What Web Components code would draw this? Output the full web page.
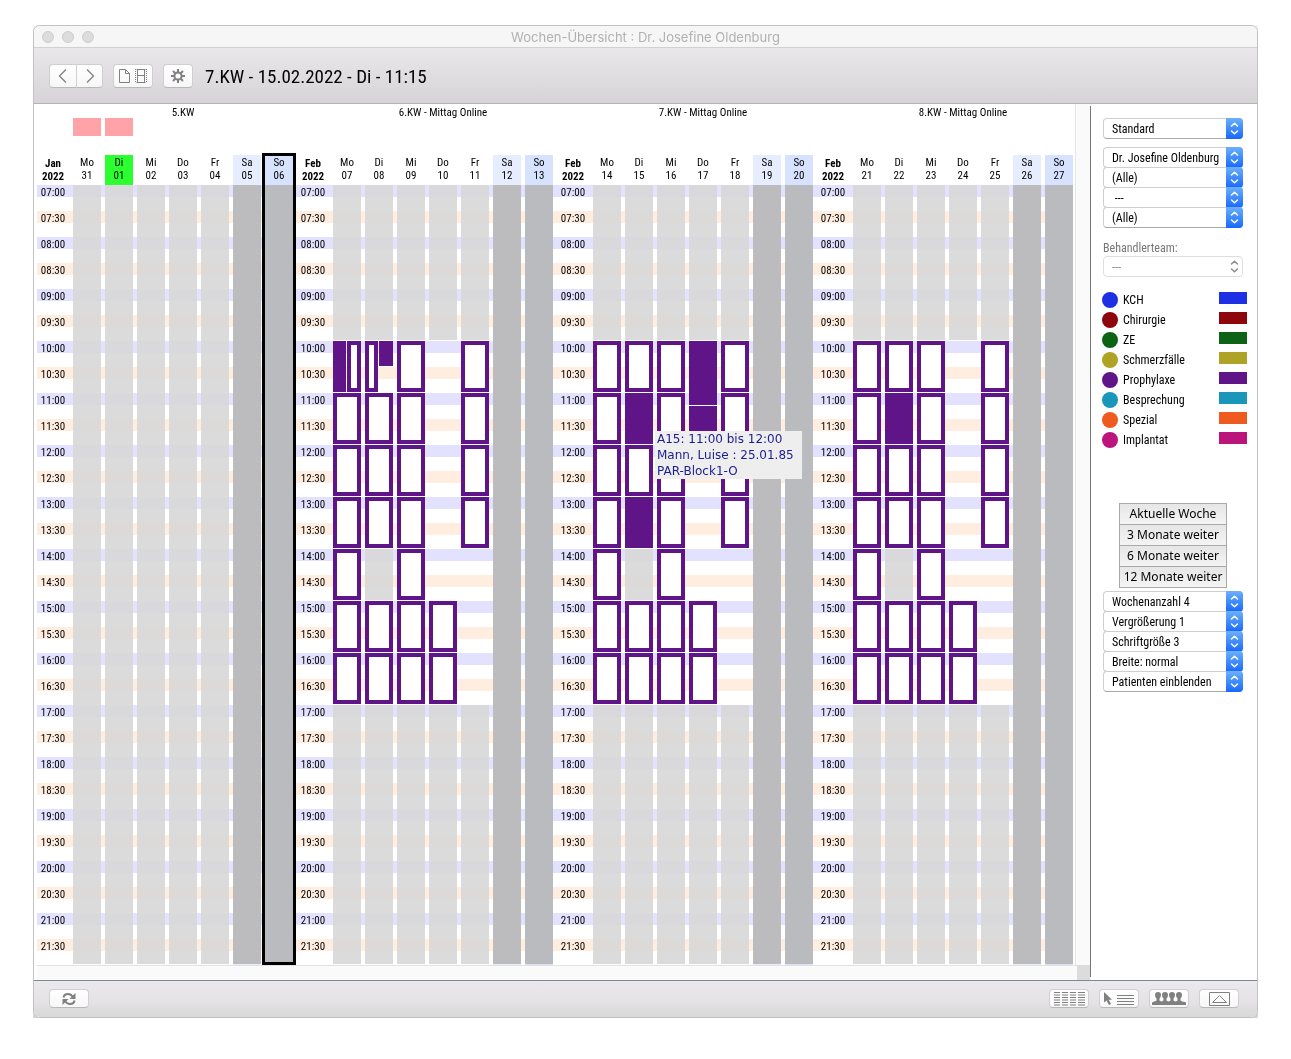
<!DOCTYPE html>
<html lang="de">
<head>
<meta charset="utf-8">
<title>Wochen-Übersicht</title>
<style>
  html { background: #fff; }
  body { margin: 25px 33px 41px; font-family: "Roboto Condensed", "Liberation Sans", sans-serif; color: #000; }
</style>
</head>
<body>
<planner-window heading="Wochen-Übersicht : Dr. Josefine Oldenburg">
  <planner-toolbar slot="toolbar">7.KW - 15.02.2022 - Di - 11:15</planner-toolbar>
  <week-calendar slot="main"></week-calendar>
  <planner-sidebar slot="side"></planner-sidebar>
  <planner-footer slot="footer"></planner-footer>
</planner-window>

<script>
const PURPLE = '#5f1487';

function define(name, render) {
  customElements.define(name, class extends HTMLElement {
    connectedCallback() {
      if (this.shadowRoot) return;
      this.attachShadow({ mode: 'open' }).innerHTML = render(this);
    }
  });
}

/* Window frame with title bar */
define('planner-window', el => `
  <style>
    :host { display: block; filter: drop-shadow(0 10px 12px rgba(0,0,0,.32)) drop-shadow(0 0 6px rgba(0,0,0,.08)); }
    .frame { display: flex; flex-direction: column; border: 1px solid #c2c2c2; border-radius: 7px; background: #fff; }
    header { display: grid; grid-template-columns: 1fr auto 1fr; align-items: center; height: 21px;
      background: #f6f6f6; border-bottom: 1px solid #d1d1d1; border-radius: 6px 6px 0 0; }
    .lights { display: flex; gap: 8px; padding-left: 8px; }
    i { width: 10px; height: 10px; border-radius: 50%; background: #dcdcdc; border: 1px solid #cdcdcd; }
    h1 { margin: 0; font: 13px/20px Inter, "Liberation Sans", sans-serif; color: #b1b1b1; }
    main { display: flex; align-items: stretch; }
    ::slotted([slot=main]) { flex: 1; min-width: 0; }
  </style>
  <div class="frame">
    <header><div class="lights"><i></i><i></i><i></i></div><h1>${el.getAttribute('heading')}</h1></header>
    <slot name="toolbar"></slot>
    <main><slot name="main"></slot><slot name="side"></slot></main>
    <slot name="footer"></slot>
  </div>`);

/* Raised push button that holds an icon */
define('icon-button', el => `
  <style>
    :host { display: block; }
    button { display: flex; align-items: center; justify-content: center; width: 100%; height: 100%; padding: 0;
      background: linear-gradient(#fff, #f7f7f7); border: 1px solid #d0ced0; border-bottom-color: #b9b7b9;
      border-radius: var(--corners, 4px); color: #808080; }
  </style>
  <button type="button" aria-label="${el.getAttribute('label')}"><slot></slot></button>`);

define('planner-toolbar', () => `
  <style>
    :host { display: flex; align-items: center; height: 55px; padding-left: 15px;
      background: linear-gradient(#e9e7e9, #d6d4d6); border-bottom: 1px solid #b4b2b4; }
    icon-button { height: 24px; flex: none; }
    .prev { width: 28px; --corners: 4px 0 0 4px; }
    .next { width: 27px; margin-left: -1px; --corners: 0 4px 4px 0; }
    .views { width: 40px; margin-left: 10px; }
    .gear { width: 30px; margin-left: 10px; }
    h2 { margin: 0 0 0 12px; font-size: 19px; line-height: 24px; font-weight: 400; padding-top: 3px; }
    svg { display: block; fill: none; stroke: currentColor; }
  </style>
  <icon-button class="prev" label="Zurück"><svg width="10" height="14" viewBox="0 0 10 14" stroke-width="1.3"><path d="M8 .5 1.5 7 8 13.500"/></svg></icon-button>
  <icon-button class="next" label="Weiter"><svg width="10" height="14" viewBox="0 0 10 14" stroke-width="1.3"><path d="M2 .5 8.500 7 2 13.500"/></svg></icon-button>
  <icon-button class="views" label="Ansicht"><svg width="28" height="14" viewBox="0 0 28 14"><path d="M.5.5h6l4 4v9H.5zM6.500.5v4h4M17.500.5h9M17.500 13.500h9M18.500 6.500h7M18.500 0v14M25.500 0v14"/><path stroke-dasharray="1 1" d="M16.500 0v14M27.500 0v14"/></svg></icon-button>
  <icon-button class="gear" label="Einstellungen"><svg width="16" height="16" viewBox="0 0 16 16"><circle cx="8" cy="8" r="3.600" stroke-width="2"/><path stroke-width="2" d="M8 1v3M8 12v3M1 8h3M12 8h3M3 3l2.200 2.200M10.800 10.800 13 13M13 3l-2.200 2.200M5.200 10.800 3 13"/></svg></icon-button>
  <h2><slot></slot></h2>`);

/* Calendar ------------------------------------------------------------ */
/* A slot is [start quarter counted from 07:00, quarters, kind, placement] */
const hours = (list, kind = 'free') => list.map(h => [(h - 7) * 4, 4, kind]);
const closedEnds = [[0, 12, 'closed'], [40, 20, 'closed']];
const allDay = [[0, 60, 'closed']];
const noon = [[28, 4, 'closed']];

function workWeek(first, changes = {}) {
  const base = {
    Mo: hours([10, 11, 12, 13, 14, 15, 16]),
    Di: [...hours([10, 11, 12, 13, 15, 16]), ...noon],
    Mi: hours([10, 11, 12, 13, 14, 15, 16]),
    Do: hours([15, 16]),
    Fr: hours([10, 11, 12, 13])
  };
  const days = { ...base, ...changes };
  return ['Mo', 'Di', 'Mi', 'Do', 'Fr', 'Sa', 'So'].map((n, i) => ({
    name: n, date: String(first + i).padStart(2, '0'),
    slots: i > 4 ? allDay : [...closedEnds, ...days[n]]
  }));
}

const weeks = [
  { title: '5.KW', month: 'Jan', days: ['31', '01', '02', '03', '04', '05', '06'].map((d, i) => ({
      name: ['Mo', 'Di', 'Mi', 'Do', 'Fr', 'Sa', 'So'][i], date: d, slots: allDay,
      flag: i < 2, today: i === 1, selected: i === 6 })) },
  { title: '6.KW - Mittag Online', month: 'Feb', days: workWeek(7, {
      Mo: [[12, 4, 'booked', 'left'], [12, 4, 'free', 'right'], ...hours([11, 12, 13, 14, 15, 16])],
      Di: [[12, 4, 'free', 'left'], [12, 2, 'booked', 'right'], ...hours([11, 12, 13, 15, 16]), ...noon] }) },
  { title: '7.KW - Mittag Online', month: 'Feb', days: workWeek(14, {
      Di: [...hours([10, 12, 15, 16]), [16, 4, 'booked', 'tip'], [24, 4, 'booked'], ...noon],
      Do: [[12, 5, 'booked'], [17, 4, 'booked'], ...hours([15, 16])] }) },
  { title: '8.KW - Mittag Online', month: 'Feb', days: workWeek(21, {
      Di: [...hours([10, 12, 13, 15, 16]), ...hours([11], 'booked'), ...noon] }) }
];

customElements.define('day-column', class extends HTMLElement {
  set day(d) {
    const weekend = d.name === 'Sa' ? 'sat' : d.name === 'So' ? 'sun' : '';
    this.attachShadow({ mode: 'open' }).innerHTML = `
    <style>
      :host { display: block; position: relative; min-width: 0; font-size: 11px; line-height: 13px; text-align: center; }
      .flag { height: 18px; margin-bottom: 19px; }
      .flag.on { background: #ffa3a8; }
      .col { position: relative; }
      .sat { background: #e6edff; } .sun { background: #d7e2ff; }
      .head { height: 29px; padding-top: 1px; }
      .today .head { background: #2bff2f; }
      .selected::after { content: ""; position: absolute; inset: -2px -3px 0; border: 3px solid #000; z-index: 1; }
      .body { display: grid; grid-template: repeat(60, 13px) / 13fr 14fr; column-gap: 1px; }
      .slot { grid-column: 1 / -1; margin-bottom: 1px; box-sizing: border-box; position: relative; }
      .left { grid-column: 1; } .right { grid-column: 2; }
      .closed { background: rgba(216,216,216,.93); }
      .sat .closed { background: #bcbcbe; } .sun .closed { background: #b9bbbf; }
      .free { border: 4px solid ${PURPLE}; background: #fff; }
      .booked { background: ${PURPLE}; }
      .tip { z-index: 3; }
    </style>
    <div class="flag ${d.flag ? 'on' : ''}"></div>
    <div class="col ${weekend} ${d.today ? 'today' : ''} ${d.selected ? 'selected' : ''}">
      <div class="head">${d.name}<br>${d.date}</div>
      <div class="body">${d.slots.map(([s, n, kind, place = '']) =>
        `<div class="slot ${kind} ${place}" style="grid-row:${s + 1}/span ${n}">${place === 'tip' ? '<slot-tip></slot-tip>' : ''}</div>`).join('')}</div>
    </div>`;
  }
});

/* Floating note with the appointment details */
define('slot-tip', () => `
  <style>
    :host { position: absolute; left: 30px; top: 38px; z-index: 4; box-sizing: border-box; width: 147px; padding-left: 2px;
      background: #eee; color: #1c1c8e; font: 12px/16px "DejaVu Sans", sans-serif; text-align: left; white-space: nowrap; }
  </style>
  <div>A15: 11:00 bis 12:00</div><div>Mann, Luise : 25.01.85</div><div>PAR-Block1-O</div>`);

customElements.define('week-block', class extends HTMLElement {
  set week(w) {
    const times = Array.from({ length: 30 }, (_, i) =>
      `<div>${String(7 + (i >> 1)).padStart(2, '0')}:${i % 2 ? '30' : '00'}</div>`).join('');
    const root = this.attachShadow({ mode: 'open' });
    root.innerHTML = `
    <style>
      :host { display: grid; grid-template-columns: 32px repeat(7, minmax(0, 1fr)); column-gap: 4px; font-size: 11px; text-align: center; }
      .title { grid-column: 2 / -1; height: 12px; line-height: 13px; padding-top: 2px; white-space: nowrap; }
      .axis { grid-column: 1; padding-top: 37px; }
      .month { height: 28px; padding-top: 2px; line-height: 13px; font-weight: 700; }
      .times div { height: 26px; line-height: 16px; }
    </style>
    <div class="title">${w.title}</div>
    <div class="axis"><div class="month">${w.month}<br>2022</div><div class="times">${times}</div></div>`;
    for (const d of w.days) {
      const c = document.createElement('day-column');
      c.day = d;
      root.append(c);
    }
  }
});

customElements.define('week-calendar', class extends HTMLElement {
  connectedCallback() {
    if (this.shadowRoot) return;
    const root = this.attachShadow({ mode: 'open' });
    root.innerHTML = `
    <style>
      :host { display: flex; flex-direction: column; padding-left: 3px; }
      .view { display: flex; }
      .weeks { flex: 1; min-width: 0; display: grid; grid-template-columns: repeat(4, minmax(0, 1fr)); column-gap: 4px; margin-right: 2px;
        background: repeating-linear-gradient(#e2e2ff 0 12px, #fff 12px 26px, #ffeee0 26px 38px, #fff 38px 52px) 0 81px no-repeat; }
      .vbar { width: 14px; background: #fafafa; border-left: 1px solid #e6e6e6; }
      .hbar { display: flex; height: 14px; border-top: 1px solid #e2e2e2; background: #fafafa; justify-content: flex-end; }
      .corner { width: 13px; background: #dcdcdc; margin-top: -1px; }
    </style>
    <div class="view"><div class="weeks"></div><div class="vbar"></div></div>
    <div class="hbar"><div class="corner"></div></div>`;
    for (const w of weeks) {
      const b = document.createElement('week-block');
      b.week = w;
      root.querySelector('.weeks').append(b);
    }
  }
});

/* Side panel ---------------------------------------------------------- */
define('pop-up', el => `
  <style>
    :host { display: grid; height: 21px; }
    :host(:not([first])) { margin-top: -1px; }
    select, .cap { grid-area: 1 / 1; }
    select { appearance: none; width: 100%; height: 21px; margin: 0; padding: 1px 20px 0 8px; border: 1px solid #cfcfcf; border-bottom-color: #a8a8a8;
      border-radius: 4px; background: #fff; color: #000; font: inherit; font-size: 12px; line-height: 19px; }
    select:disabled { color: #8a8a8a; border-color: #dedede; opacity: 1; }
    .cap { justify-self: end; width: 17px; height: 21px; display: flex; align-items: center; justify-content: center; pointer-events: none;
      color: #fff; background: linear-gradient(#6cb0fb, #1768fd); border-radius: 0 4px 4px 0; }
    :host([off]) .cap { background: none; color: #8a8a8a; }
    svg { fill: none; stroke: currentColor; stroke-width: 1.500; stroke-linecap: round; stroke-linejoin: round; }
  </style>
  <select aria-label="${el.getAttribute('label')}" ${el.hasAttribute('off') ? 'disabled' : ''}><option>${el.getAttribute('value')}</option></select>
  <span class="cap"><svg width="9" height="13" viewBox="0 0 9 13"><path d="M1.500 4 4.500 1.200 7.500 4M1.500 9l3 2.800 3-2.800"/></svg></span>`);

define('legend-row', el => `
  <style>
    :host { display: flex; align-items: flex-start; height: 18px; padding-top: 2px; font-size: 12px; line-height: 16px; }
    .dot { width: 16px; height: 16px; border-radius: 50%; background: var(--c); margin-right: 5px; }
    .bar { width: 28px; height: 12px; background: var(--c); margin-left: auto; }
  </style>
  <span class="dot"></span><slot></slot><span class="bar"></span>`);

const legend = [['KCH', '#1d30e3'], ['Chirurgie', '#8d060c'], ['ZE', '#0c6313'], ['Schmerzfälle', '#aea324'],
  ['Prophylaxe', PURPLE], ['Besprechung', '#1a96ba'], ['Spezial', '#ef5a20'], ['Implantat', '#bb157b']];

define('planner-sidebar', () => `
  <style>
    :host { display: block; width: 167px; flex: none; box-sizing: border-box;
      background: linear-gradient(#777, #777) 0 2px / 1px calc(100% - 5px) no-repeat; }
    .group { margin: 8px 14px 0 13px; }
    .group:first-of-type { margin-top: 14px; }
    .team { margin: 12px 13px 0; font-size: 12px; line-height: 16px; color: #777; }
    .team + .group { margin-top: 0; }
    .legend { margin: 13px 10px 53px 12px; }
    .jumps { display: flex; flex-direction: column; margin: 0 30px 0 29px; }
    .jumps button { height: 22px; margin: 0 0 -1px; padding: 0; border: 1px solid #a9a9a9; border-radius: 0; background: linear-gradient(#e6e6e6, #f4f4f4);
      font: 12px/20px "Noto Sans", sans-serif; color: #000; white-space: nowrap; }
    .jumps + .group { margin-top: 4px; }
  </style>
  <div class="group"><pop-up first label="Vorlage" value="Standard"></pop-up></div>
  <div class="group">
    <pop-up first label="Behandler" value="Dr. Josefine Oldenburg"></pop-up>
    <pop-up label="Raum" value="(Alle)"></pop-up>
    <pop-up label="Art" value="&nbsp;---"></pop-up>
    <pop-up label="Filter" value="(Alle)"></pop-up>
  </div>
  <div class="team">Behandlerteam:</div>
  <div class="group"><pop-up first off label="Behandlerteam" value="---"></pop-up></div>
  <div class="legend">${legend.map(([n, c]) => `<legend-row style="--c:${c}">${n}</legend-row>`).join('')}</div>
  <div class="jumps"><button type="button">Aktuelle Woche</button><button type="button">3 Monate weiter</button><button type="button">6 Monate weiter</button><button type="button">12 Monate weiter</button></div>
  <div class="group">
    <pop-up first label="Wochenanzahl" value="Wochenanzahl 4"></pop-up>
    <pop-up label="Vergrößerung" value="Vergrößerung 1"></pop-up>
    <pop-up label="Schriftgröße" value="Schriftgröße 3"></pop-up>
    <pop-up label="Breite" value="Breite: normal"></pop-up>
    <pop-up label="Patienten" value="Patienten einblenden"></pop-up>
  </div>`);

/* Head and shoulders, repeated side by side for the team icon */
const person = x => `<path transform="translate(${x} 0)" d="M3 3q0-3 3-3t3 3q0 2-1.500 3.500v2l2 1.500H2.500l2-1.500v-2Q3 5 3 3z"/>`;
define('planner-footer', () => `
  <style>
    :host { display: flex; gap: 10px; height: 28px; padding: 8px 18px 0 15px; border-top: 1px solid #7d8798;
      background: linear-gradient(#ebe9eb, #e4e2e4 60%, #d8d8d8); border-radius: 0 0 6px 6px; }
    icon-button { width: 40px; height: 19px; }
    icon-button:first-of-type { margin-right: auto; }
    svg { display: block; fill: none; stroke: currentColor; }
  </style>
  <icon-button label="Aktualisieren"><svg width="14" height="14" viewBox="0 0 14 14" stroke-width="2"><path d="M1.500 5.500Q2 2 6 2q3 0 5 3M12.500 8.500Q12 12 8 12 5 12 3 9"/><path stroke="none" fill="currentColor" d="M13.500 1v6H7.500zM.5 13V7h6z"/></svg></icon-button>
  <icon-button label="Wochenraster"><svg width="31" height="14" viewBox="0 0 31 14"><path d="M0 .5h31M0 3h31M0 5.500h31M0 8h31M0 10.500h31M0 13h31"/><path stroke="#fafafa" stroke-width="2" d="M7 0v14M15 0v14M23 0v14"/></svg></icon-button>
  <icon-button label="Liste"><svg width="30" height="14" viewBox="0 0 30 14"><path d="M13 3.500h17M13 6.500h17M13 9.500h17M13 12.500h17"/><path stroke="none" fill="currentColor" d="M0 0v10.500l2.500-2L5 13l2-1-2.300-4.200H8z"/></svg></icon-button>
  <icon-button label="Team"><svg width="34" height="13" viewBox="0 0 34 13"><g fill="currentColor" stroke="none">${person(0)}${person(7)}${person(14)}${person(21)}<path d="M0 11q0-1.500 2.500-1.500h27Q34 9.500 34 11v2H0z"/></g></svg></icon-button>
  <icon-button label="Einblenden"><svg width="21" height="14" viewBox="0 0 21 14"><path d="M.5.5h20v13H.5zM3.500 10.500h14L10.500 3.500z"/></svg></icon-button>`);
</script>
</body>
</html>
